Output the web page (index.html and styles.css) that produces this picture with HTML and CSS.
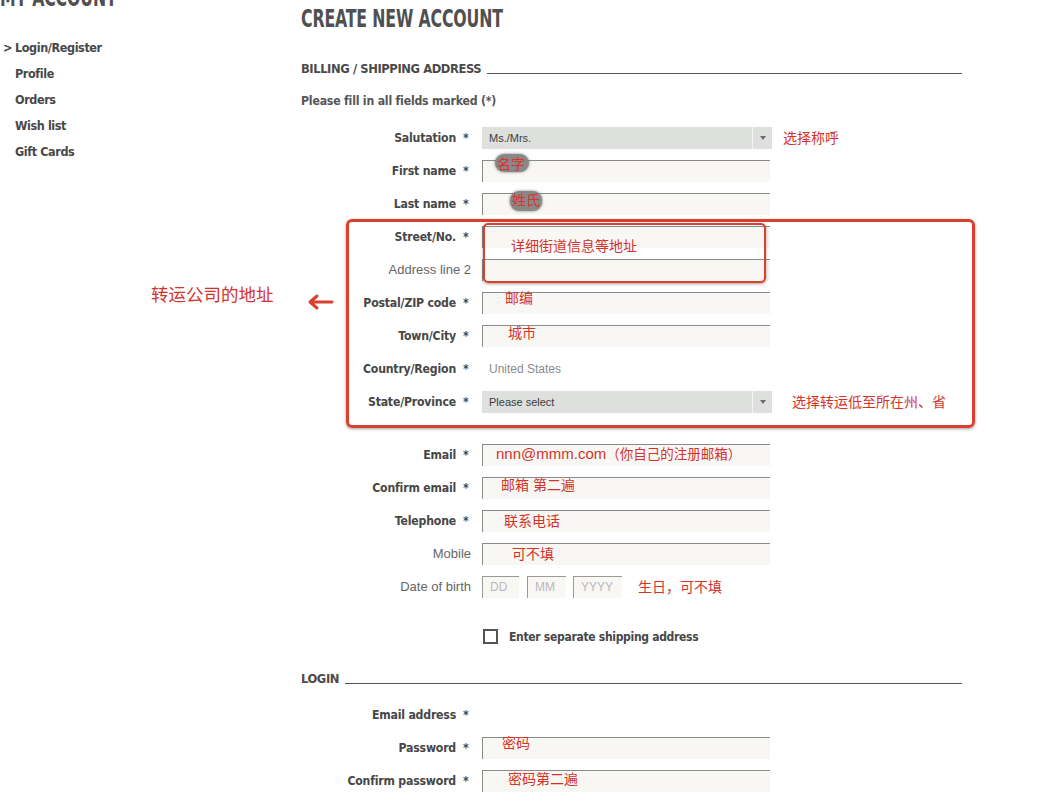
FILE: index.html
```html
<!DOCTYPE html>
<html lang="en">
<head>
<meta charset="utf-8">
<title>Create new account</title>
<link rel="stylesheet" href="styles.css">
</head>
<body>
<div class="page">
  <aside class="side">
    <h2 class="side-title"><span class="squeeze">MY ACCOUNT</span></h2>
    <ul class="side-nav">
      <li class="active"><span class="caret">&gt;</span>Login/Register</li>
      <li>Profile</li>
      <li>Orders</li>
      <li>Wish list</li>
      <li>Gift Cards</li>
    </ul>
  </aside>

  <main class="main">
    <h1 class="title"><span class="squeeze">CREATE NEW ACCOUNT</span></h1>
    <div class="section-head"><span class="sh-text">BILLING / SHIPPING ADDRESS</span><span class="rule"></span></div>
    <p class="hint">Please fill in all fields marked (*)</p>

    <div class="form">
      <div class="row first-row">
        <label class="lbl">Salutation<span class="star">*</span></label>
        <div class="select"><span class="sel-val">Ms./Mrs.</span><span class="sel-btn"><span class="tri"></span></span></div>
        <span class="note side-note">选择称呼</span>
      </div>
      <div class="row">
        <label class="lbl">First name<span class="star">*</span></label>
        <div class="field"><span class="pill pill-first">名字</span></div>
      </div>
      <div class="row">
        <label class="lbl">Last name<span class="star">*</span></label>
        <div class="field"><span class="pill pill-last">姓氏</span></div>
      </div>
      <div class="row">
        <label class="lbl">Street/No.<span class="star">*</span></label>
        <div class="field"><span class="note in n-street">详细街道信息等地址</span></div>
      </div>
      <div class="row">
        <label class="lbl opt">Address line 2</label>
        <div class="field"></div>
      </div>
      <div class="row">
        <label class="lbl">Postal/ZIP code<span class="star">*</span></label>
        <div class="field"><span class="note in n-postal">邮编</span></div>
      </div>
      <div class="row">
        <label class="lbl">Town/City<span class="star">*</span></label>
        <div class="field"><span class="note in n-city">城市</span></div>
      </div>
      <div class="row">
        <label class="lbl">Country/Region<span class="star">*</span></label>
        <span class="static">United States</span>
      </div>
      <div class="row">
        <label class="lbl">State/Province<span class="star">*</span></label>
        <div class="select"><span class="sel-val">Please select</span><span class="sel-btn"><span class="tri"></span></span></div>
        <span class="note side-note wide">选择转运低至所在州、省</span>
      </div>

      <div class="row gap-row">
        <label class="lbl">Email<span class="star">*</span></label>
        <div class="field"><span class="note in n-email"><span class="latin">nnn@mmm.com</span>（你自己的注册邮箱）</span></div>
      </div>
      <div class="row">
        <label class="lbl">Confirm email<span class="star">*</span></label>
        <div class="field"><span class="note in n-cemail">邮箱 第二遍</span></div>
      </div>
      <div class="row">
        <label class="lbl">Telephone<span class="star">*</span></label>
        <div class="field"><span class="note in n-tel">联系电话</span></div>
      </div>
      <div class="row">
        <label class="lbl opt">Mobile</label>
        <div class="field"><span class="note in n-mobile">可不填</span></div>
      </div>
      <div class="row">
        <label class="lbl opt">Date of birth</label>
        <div class="dob">
          <span class="dbox d-dd">DD</span>
          <span class="dbox d-mm">MM</span>
          <span class="dbox d-yy">YYYY</span>
        </div>
        <span class="note dob-note">生日，可不填</span>
      </div>

      <div class="row check-row">
        <span class="lbl"></span>
        <span class="checkbox"></span>
        <span class="check-label">Enter separate shipping address</span>
      </div>
    </div>

    <div class="section-head login-head"><span class="sh-text">LOGIN</span><span class="rule"></span></div>

    <div class="form">
      <div class="row login-first">
        <label class="lbl">Email address<span class="star">*</span></label>
      </div>
      <div class="row">
        <label class="lbl">Password<span class="star">*</span></label>
        <div class="field"><span class="note in n-pw">密码</span></div>
      </div>
      <div class="row">
        <label class="lbl">Confirm password<span class="star">*</span></label>
        <div class="field"><span class="note in n-cpw">密码第二遍</span></div>
      </div>
    </div>
  </main>

  <div class="ann-box big-box"></div>
  <div class="ann-box small-box"></div>
  <span class="note left-note">转运公司的地址</span>
  <svg class="ann-arrow" width="30" height="18" viewBox="0 0 30 18">
    <path d="M27 9 H6 M12 3 L5 9 L12 15" fill="none" stroke="#d9412f" stroke-width="3" stroke-linecap="round" stroke-linejoin="round"/>
  </svg>
</div>
</body>
</html>
```

FILE: styles.css
```css
* { box-sizing: border-box; }

html, body {
  margin: 0;
  padding: 0;
  background: #ffffff;
}

body {
  font-family: "Liberation Sans", Arial, sans-serif;
  color: #4a4a4a;
}

.page {
  position: relative;
  display: flex;
  width: 1054px;
  height: 807px;
  overflow: hidden;
}

/* ---------- sidebar ---------- */
.side {
  width: 301px;
  flex: none;
}

.side-title,
.title {
  font-family: "DejaVu Sans Condensed", "DejaVu Sans", sans-serif;
  font-stretch: condensed;
  font-weight: bold;
  font-size: 25px;
  line-height: 37px;
  height: 37px;
  letter-spacing: -0.2px;
  color: #505050;
  margin: 0;
  white-space: nowrap;
}

.squeeze {
  display: inline-block;
  transform: scaleX(0.7);
  transform-origin: left center;
}

.side-title {
  margin-top: -21px;
}

.side-nav {
  list-style: none;
  margin: 19px 0 0 0;
  padding: 0;
}

.side-nav li {
  font-family: "DejaVu Sans Condensed", "DejaVu Sans", sans-serif;
  font-stretch: condensed;
  font-weight: bold;
  font-size: 12.5px;
  letter-spacing: -0.4px;
  line-height: 26px;
  height: 26px;
  padding-left: 15px;
  color: #484848;
}

.caret {
  display: inline-block;
  width: 12px;
  margin-left: -12px;
  letter-spacing: 0;
}

/* ---------- main ---------- */
.main {
  width: 661px;
  flex: none;
}

.section-head {
  display: flex;
  align-items: center;
  height: 33px;
  margin-top: 15px;
}

.sh-text {
  font-family: "DejaVu Sans Condensed", "DejaVu Sans", sans-serif;
  font-stretch: condensed;
  font-weight: bold;
  font-size: 12.8px;
  letter-spacing: -0.4px;
  line-height: 33px;
  color: #4a4a4a;
  white-space: nowrap;
}

.rule {
  flex: 1;
  height: 1px;
  margin-top: 10px;
  margin-left: 6px;
  border-bottom: 1px solid #555;
}

.login-head {
  margin-top: 9px;
}

.hint {
  margin: 0;
  height: 32px;
  line-height: 32px;
  font-family: "DejaVu Sans Condensed", "DejaVu Sans", sans-serif;
  font-stretch: condensed;
  font-weight: bold;
  font-size: 12.2px;
  letter-spacing: -0.2px;
  color: #555;
}

.form {
  display: flex;
  flex-direction: column;
}

.row {
  display: flex;
  align-items: center;
  height: 33px;
  flex: none;
}

.first-row { margin-top: 4px; }
.gap-row { margin-top: 20px; }
.check-row { margin-top: 17px; }
.login-first { margin-top: 3px; }

.lbl {
  width: 170px;
  flex: none;
  margin-right: 11px;
  text-align: right;
  font-family: "DejaVu Sans Condensed", "DejaVu Sans", sans-serif;
  font-stretch: condensed;
  font-weight: bold;
  font-size: 12.2px;
  letter-spacing: -0.2px;
  color: #474747;
  white-space: nowrap;
}

.star {
  display: inline-block;
  margin-left: 7px;
  width: 8px;
  text-align: left;
  font-weight: bold;
}

.lbl.opt {
  font-family: "Liberation Sans", Arial, sans-serif;
  font-stretch: normal;
  font-weight: normal;
  font-size: 13px;
  letter-spacing: 0;
  color: #666;
}

.field {
  position: relative;
  width: 288px;
  height: 22px;
  flex: none;
  background: #f8f7f3;
  border-top: 1px solid #8a8a8a;
  border-left: 1px solid #8a8a8a;
}

.select {
  display: flex;
  align-items: center;
  width: 290px;
  height: 22px;
  flex: none;
  background: #dde0dd;
  font-size: 11px;
  color: #3c3c3c;
}

.sel-val {
  flex: 1;
  padding-left: 7px;
}

.sel-btn {
  width: 20px;
  height: 22px;
  border-left: 1px solid #f4f5f4;
  display: flex;
  align-items: center;
  justify-content: center;
}

.tri {
  width: 0;
  height: 0;
  border-left: 3px solid transparent;
  border-right: 3px solid transparent;
  border-top: 4px solid #6a6a6a;
}

.static {
  padding-left: 7px;
  font-size: 12px;
  color: #8a8a8a;
}

.dob {
  display: flex;
  gap: 7px;
}

.dbox {
  height: 22px;
  background: #f8f7f3;
  border-top: 1px solid #9a9a9a;
  border-left: 1px solid #9a9a9a;
  font-size: 12px;
  line-height: 21px;
  padding-left: 7px;
  color: #b9b9b9;
}

.d-dd { width: 37px; }
.d-mm { width: 39px; margin-left: 1px; }
.d-yy { width: 49px; }

.checkbox {
  width: 15px;
  height: 15px;
  flex: none;
  margin-left: 1px;
  border: 2px solid #555;
  background: #fff;
}

.check-label {
  margin-left: 11px;
  font-family: "DejaVu Sans Condensed", "DejaVu Sans", sans-serif;
  font-stretch: condensed;
  font-weight: bold;
  font-size: 12px;
  letter-spacing: -0.3px;
  color: #474747;
}

/* ---------- annotations ---------- */
.note {
  font-family: "Liberation Sans", "Noto Sans CJK SC", sans-serif;
  font-size: 14px;
  line-height: 16px;
  color: #d4332a;
  white-space: nowrap;
}

.side-note { margin-left: 11px; }
.side-note.wide { margin-left: 20px; }
.dob-note { margin-left: 16px; }

.note.in {
  position: absolute;
}

.n-street { left: 28px; top: 11px; }
.n-postal { left: 22px; top: -3px; }
.n-city   { left: 25px; top: -1px; }
.n-email  { left: 13px; top: 1px; font-size: 13.5px; }
.n-email .latin { font-size: 15px; }
.n-cemail { left: 18px; top: -1px; }
.n-tel    { left: 21px; top: 2px; }
.n-mobile { left: 29px; top: 2px; }
.n-pw     { left: 19px; top: -3px; }
.n-cpw    { left: 25px; top: 0px; }

.pill {
  position: absolute;
  font-family: "Noto Sans CJK SC", sans-serif;
  font-size: 14px;
  line-height: 16px;
  color: #e0302e;
  background: #888888;
  border-radius: 9px;
  box-shadow: 0 0 3px rgba(90, 90, 90, 0.8);
}

.pill-first {
  left: 12px;
  top: -7px;
  padding: 1px 4px 1px 2px;
}

.pill-last {
  left: 27px;
  top: -3px;
  padding: 0 2px 4px 2px;
}

.ann-box {
  position: absolute;
  border: 3px solid #d9412f;
  border-radius: 6px;
  box-shadow: 0 1px 3px rgba(60, 30, 20, 0.45);
}

.big-box {
  left: 346px;
  top: 219px;
  width: 629px;
  height: 209px;
}

.small-box {
  left: 483px;
  top: 223px;
  width: 283px;
  height: 60px;
  border-width: 2.5px;
  border-radius: 5px;
}

.left-note {
  position: absolute;
  left: 151px;
  top: 284px;
  font-family: "Noto Sans CJK SC", sans-serif;
  font-size: 17.5px;
  line-height: 20px;
}

.ann-arrow {
  position: absolute;
  left: 305px;
  top: 293px;
}
```
